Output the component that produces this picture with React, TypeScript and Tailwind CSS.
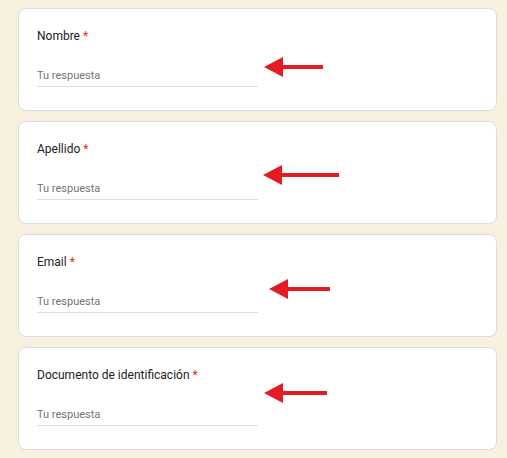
import React from "react";

type Q = { label: string; tipX: number; tipY: number; w: number };

const questions: Q[] = [
  { label: "Nombre", tipX: 245, tipY: 58, w: 59 },
  { label: "Apellido", tipX: 244, tipY: 53, w: 76 },
  { label: "Email", tipX: 250, tipY: 54, w: 61 },
  { label: "Documento de identificación", tipX: 245, tipY: 45, w: 63 },
];

function Arrow({ x, y, w }: { x: number; y: number; w: number }) {
  return (
    <svg
      className="absolute"
      style={{ left: x, top: y - 10 }}
      width={w}
      height={20}
      viewBox={`0 0 ${w} 20`}
    >
      <polygon points="0,10 19,0 19,20" fill="#e31b23" />
      <rect x={18} y={8} width={w - 18} height={4} fill="#e31b23" />
    </svg>
  );
}

export default function App() {
  return (
    <div
      className="min-h-[458px] w-[507px] bg-[#f8f0de] pt-[8px] pl-[18px] pr-[10px] flex flex-col gap-[10px]"
      style={{ fontFamily: "Roboto, 'Liberation Sans', sans-serif" }}
    >
      {questions.map((q) => (
        <div
          key={q.label}
          className="relative h-[103px] w-[479px] rounded-[8px] border border-[#dadce0] bg-white pl-[18px] pt-[19px]"
        >
          <div className="text-[12px] leading-[16px] text-[#202124]">
            {q.label} <span className="text-[#d93025]">*</span>
          </div>
          <div className="mt-[24px] h-[19px] w-[221px] border-b border-[#dadce0] text-[11px] leading-[16px] text-[#70757a]">
            Tu respuesta
          </div>
          <Arrow x={q.tipX} y={q.tipY} w={q.w} />
        </div>
      ))}
    </div>
  );
}
